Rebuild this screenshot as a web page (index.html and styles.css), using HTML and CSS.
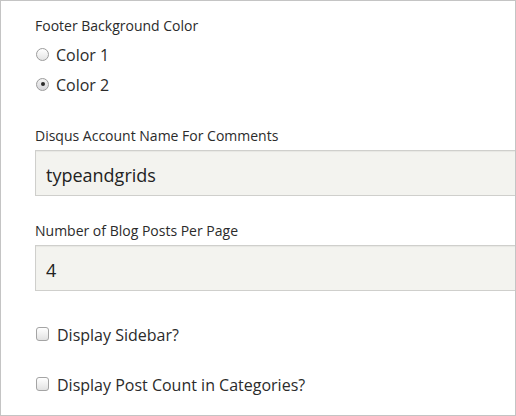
FILE: index.html
```html
<!DOCTYPE html>
<html>
<head>
<meta charset="utf-8">
<link rel="stylesheet" href="styles.css">
</head>
<body>
<div class="frame">
  <div class="field-label">Footer Background Color</div>
  <div class="radio-group">
    <label class="choice"><input type="radio" name="footer" class="radio"><span>Color 1</span></label>
    <label class="choice"><input type="radio" name="footer" class="radio" checked><span>Color 2</span></label>
  </div>

  <div class="field-label label-gap">Disqus Account Name For Comments</div>
  <input class="text-input" type="text" value="typeandgrids">

  <div class="field-label label-gap2">Number of Blog Posts Per Page</div>
  <input class="text-input" type="text" value="4">

  <div class="check-group">
    <label class="choice"><input type="checkbox" class="check"><span>Display Sidebar?</span></label>
    <label class="choice"><input type="checkbox" class="check"><span>Display Post Count in Categories?</span></label>
  </div>
</div>
</body>
</html>
```

FILE: styles.css
```css
html, body {
  margin: 0;
  padding: 0;
  background: #ffffff;
}

.frame {
  width: 516px;
  height: 416px;
  box-sizing: border-box;
  border: 1px solid #c4c4c4;
  overflow: hidden;
  padding: 15px 0 0 34px;
  font-family: "Open Sans", "DejaVu Sans", sans-serif;
  color: #2b2b2b;
}

.field-label {
  font-size: 14px;
  line-height: 20px;
  height: 20px;
}

.label-gap {
  margin-top: 30px;
}

.label-gap2 {
  margin-top: 25px;
}

.radio-group {
  margin-top: 8px;
  display: flex;
  flex-direction: column;
  gap: 8px;
}

.check-group {
  margin-top: 33px;
  display: flex;
  flex-direction: column;
  gap: 28px;
}

.choice {
  display: flex;
  align-items: center;
  height: 22px;
  font-size: 16px;
  line-height: 22px;
}

.radio {
  appearance: none;
  -webkit-appearance: none;
  margin: 0 7px 0 1px;
  width: 13px;
  height: 13px;
  box-sizing: border-box;
  border: 1px solid #9c9c9c;
  border-radius: 50%;
  background: linear-gradient(#ffffff, #e4e4e4);
  position: relative;
  top: -1px;
}

.radio:checked {
  background: linear-gradient(#f2f2f2, #d6d6da);
}

.radio:checked::after {
  content: "";
  position: absolute;
  left: 3.5px;
  top: 3.5px;
  width: 4px;
  height: 4px;
  border-radius: 50%;
  background: #2a2a2a;
}

.check {
  appearance: none;
  -webkit-appearance: none;
  margin: 0 8px 0 1px;
  width: 13px;
  height: 14px;
  box-sizing: border-box;
  border: 1px solid #a4a4a4;
  border-radius: 3px;
  background: linear-gradient(#ffffff, #e2e2e2);
  position: relative;
  top: -1px;
}

.text-input {
  display: block;
  margin: 4px 0 0 0;
  width: 520px;
  height: 46px;
  box-sizing: border-box;
  border: 1px solid #cfcfcc;
  border-right: none;
  background: #f3f3ef;
  box-shadow: inset 0 1px 1px rgba(0, 0, 0, 0.05);
  padding: 3px 10px 0 10px;
  font-family: "Open Sans", "DejaVu Sans", sans-serif;
  font-size: 18px;
  color: #222222;
  outline: none;
}
```
